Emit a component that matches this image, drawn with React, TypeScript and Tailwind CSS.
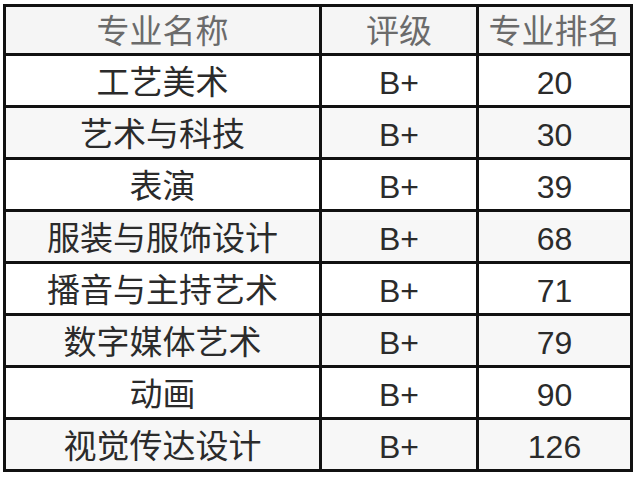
const rows = [
  { name: "工艺美术", grade: "B+", rank: "20" },
  { name: "艺术与科技", grade: "B+", rank: "30" },
  { name: "表演", grade: "B+", rank: "39" },
  { name: "服装与服饰设计", grade: "B+", rank: "68" },
  { name: "播音与主持艺术", grade: "B+", rank: "71" },
  { name: "数字媒体艺术", grade: "B+", rank: "79" },
  { name: "动画", grade: "B+", rank: "90" },
  { name: "视觉传达设计", grade: "B+", rank: "126" },
];

const font = { fontFamily: '"Liberation Sans", "Noto Sans CJK SC", sans-serif' };

export default function App() {
  return (
    <div className="w-[636px] h-[479px] bg-white pl-[3px] pt-[4px]" style={font}>
      <div className="w-[630px] border-[3px] border-[#111] flex flex-col">
        <div className="flex h-[49px] bg-[#f5f5f5] text-[#6b6b6b] text-[33px] leading-none border-b-[3px] border-[#111]">
          <div className="w-[313px] flex items-center justify-center pt-[3px]">专业名称</div>
          <div className="w-[157px] border-l-[3px] border-[#111] flex items-center justify-center pt-[3px]">评级</div>
          <div className="flex-1 border-l-[3px] border-[#111] flex items-center justify-center pt-[3px]">专业排名</div>
        </div>
        {rows.map((r, i) => (
          <div
            key={r.name}
            className={`flex text-[#2b2b2b] leading-none ${i % 2 === 1 ? "bg-[#f7f7f7]" : "bg-white"} ${i < rows.length - 1 ? "border-b-[3px] border-[#111] h-[52px]" : "h-[49px]"}`}
          >
            <div className="w-[313px] flex items-center justify-center text-[33px] pt-[3px]">{r.name}</div>
            <div className="w-[157px] border-l-[3px] border-[#111] flex items-center justify-center text-[32px] pt-[4px]">{r.grade}</div>
            <div className="flex-1 border-l-[3px] border-[#111] flex items-center justify-center text-[32px] pt-[4px]">{r.rank}</div>
          </div>
        ))}
      </div>
    </div>
  );
}
